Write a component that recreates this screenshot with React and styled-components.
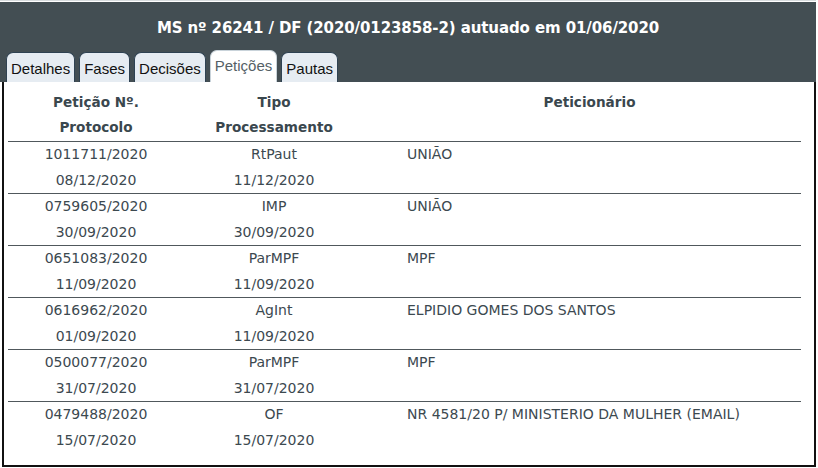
import styled, { createGlobalStyle } from "styled-components";

const GlobalStyle = createGlobalStyle`
  html, body {
    margin: 0;
    padding: 0;
    background: #ffffff;
  }
`;

const Frame = styled.div`
  width: 816px;
  padding-top: 1px;
  border-top: 1px solid #d8dcde;
`;

const Header = styled.div`
  background: #434e53;
  height: 80px;
  display: flex;
  flex-direction: column;
`;

const Title = styled.h1`
  margin: 0;
  padding-top: 15px;
  height: 33px;
  text-align: center;
  color: #ffffff;
  font: bold 15px "DejaVu Sans", Verdana, sans-serif;
  line-height: 22px;
  letter-spacing: -0.1px;
`;

const Tabs = styled.div`
  margin-top: auto;
  display: flex;
  align-items: flex-end;
  gap: 4px;
  padding-left: 6px;
`;

const Tab = styled.div`
  height: ${({ $active }) => ($active ? "32px" : "30px")};
  padding: ${({ $active }) => ($active ? "0 4px 2px" : "2px 4px 0")};
  display: flex;
  align-items: center;
  background: ${({ $active }) => ($active ? "#ffffff" : "#e6ecf2")};
  border: 1px solid ${({ $active }) => ($active ? "#c9d3da" : "#2f4252")};
  border-bottom: none;
  border-radius: 7px 7px 0 0;
  color: ${({ $active }) => ($active ? "#555f66" : "#111111")};
  font: 15px "Liberation Sans", Arial, sans-serif;
  box-sizing: border-box;
`;

const Content = styled.div`
  border: 2px solid #111111;
  border-top: none;
  margin-left: 2px;
  height: 385px;
  box-sizing: border-box;
  padding-left: 4px;
`;

const Table = styled.div`
  width: 793px;
  color: #3c4950;
  font: 14px "DejaVu Sans", Verdana, sans-serif;
`;

const Row = styled.div`
  display: grid;
  grid-template-columns: 176px 180px 1fr;
  border-top: ${({ $head }) => ($head ? "none" : "1px solid #50585c")};
  padding: ${({ $head }) => ($head ? "8px 0 1px" : "0")};
  line-height: ${({ $head }) => ($head ? "25px" : "25.5px")};
`;

const Cell = styled.div`
  display: flex;
  flex-direction: column;
  align-items: center;
`;

const NameCell = styled.div`
  padding-left: ${({ $head }) => ($head ? "14px" : "43px")};
  text-align: ${({ $head }) => ($head ? "center" : "left")};
`;

const HeadText = styled.span`
  font-weight: bold;
  font-size: 13.6px;
  color: #3a474e;
`;

const rows = [
  ["1011711/2020", "08/12/2020", "RtPaut", "11/12/2020", "UNIÃO"],
  ["0759605/2020", "30/09/2020", "IMP", "30/09/2020", "UNIÃO"],
  ["0651083/2020", "11/09/2020", "ParMPF", "11/09/2020", "MPF"],
  ["0616962/2020", "01/09/2020", "AgInt", "11/09/2020", "ELPIDIO GOMES DOS SANTOS"],
  ["0500077/2020", "31/07/2020", "ParMPF", "31/07/2020", "MPF"],
  ["0479488/2020", "15/07/2020", "OF", "15/07/2020", "NR 4581/20 P/ MINISTERIO DA MULHER (EMAIL)"],
];

const tabs = ["Detalhes", "Fases", "Decisões", "Petições", "Pautas"];

export default function App() {
  return (
    <>
      <GlobalStyle />
      <Frame>
        <Header>
          <Title>MS nº 26241 / DF (2020/0123858-2) autuado em 01/06/2020</Title>
          <Tabs>
            {tabs.map((t) => (
              <Tab key={t} $active={t === "Petições"}>
                {t}
              </Tab>
            ))}
          </Tabs>
        </Header>
        <Content>
          <Table>
            <Row $head>
              <Cell>
                <HeadText>Petição Nº.</HeadText>
                <HeadText>Protocolo</HeadText>
              </Cell>
              <Cell>
                <HeadText>Tipo</HeadText>
                <HeadText>Processamento</HeadText>
              </Cell>
              <NameCell $head>
                <HeadText>Peticionário</HeadText>
              </NameCell>
            </Row>
            {rows.map((r) => (
              <Row key={r[0]}>
                <Cell>
                  <span>{r[0]}</span>
                  <span>{r[1]}</span>
                </Cell>
                <Cell>
                  <span>{r[2]}</span>
                  <span>{r[3]}</span>
                </Cell>
                <NameCell>{r[4]}</NameCell>
              </Row>
            ))}
          </Table>
        </Content>
      </Frame>
    </>
  );
}
